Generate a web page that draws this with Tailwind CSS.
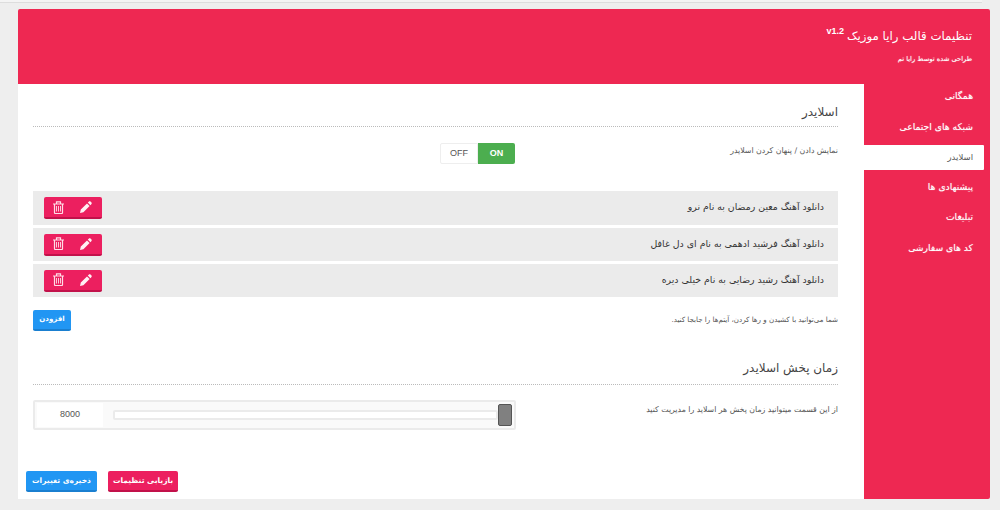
<!DOCTYPE html>
<html lang="fa" dir="rtl">
<head>
<meta charset="utf-8">
<script src="https://cdn.jsdelivr.net/npm/@tailwindcss/browser@4"></script>
</head>
<body class="w-[1000px] h-[510px] overflow-hidden bg-[#eeeeee] font-['DejaVu_Sans',sans-serif] text-[#444]">
<div class="h-[3px] w-[982px] mr-auto bg-[#f4f4f4] border-b border-[#dddddd]"></div>
<div class="w-[972px] h-[490px] mt-[6px] mr-[10px] flex flex-col bg-[#ee2852] rounded-[2px]">
  <header class="h-[75px] shrink-0 pt-[17px] pr-[18px] text-white">
    <div class="flex items-start gap-[3px] h-[21px]">
      <h1 class="text-[11.8px] leading-[20px]">تنظیمات قالب رایا موزیک</h1>
      <span class="text-[9px] leading-[10px] font-bold font-['Liberation_Sans',sans-serif]" dir="ltr">v1.2</span>
    </div>
    <p class="mt-[6px] text-[6.7px] leading-[12px] [text-shadow:0_0_1px_rgba(255,255,255,0.7)]">طراحی شده توسط رایا تم</p>
  </header>
  <div class="flex flex-1 min-h-0">
    <nav class="w-[126px] shrink-0 text-[9.2px] text-white [text-shadow:0_0_1px_rgba(255,255,255,0.6)]">
      <a class="flex items-center h-[24px] pr-[17px]">همگانی</a>
      <a class="flex items-center h-[37px] pr-[17px]">شبکه های اجتماعی</a>
      <a class="flex items-center h-[25px] pr-[11px] mr-[6px] bg-white text-[#555] text-[8.5px] rounded-r-[1px] [text-shadow:none]">اسلایدر</a>
      <a class="flex items-center h-[34px] pr-[17px]">پیشنهادی ها</a>
      <a class="flex items-center h-[26px] pr-[17px]">تبلیغات</a>
      <a class="flex items-center h-[36px] pr-[17px]">کد های سفارشی</a>
    </nav>
    <main class="flex-1 min-w-0 bg-white flex flex-col pr-[26px] pl-[15px] pb-[7px] pt-[19px]">
      <section>
        <h2 class="text-[12px] leading-[19px] text-[#444] h-[24px] border-b border-dotted border-[#bbbbbb]">اسلایدر</h2>
        <div class="flex items-center justify-between h-[23px] mt-[15px] pl-[407px]">
          <span class="text-[7.8px] text-[#555] pb-[6px]">نمایش دادن / پنهان کردن اسلایدر</span>
          <div class="flex h-[21px]" dir="ltr">
            <span class="w-[38px] flex items-center justify-center border border-[#eeeeee] rounded-l-[2px] text-[#555] font-['Liberation_Sans',sans-serif] text-[9px]">OFF</span>
            <span class="w-[37px] flex items-center justify-center bg-[#4cae4f] text-white rounded-r-[2px] font-['Liberation_Sans',sans-serif] text-[9px] font-bold">ON</span>
          </div>
        </div>
        <ul class="mt-[26px] flex flex-col gap-[3px]">
          <li class="h-[34px] bg-[#ebebeb] flex items-center justify-between pr-[14px] pl-[11px]">
            <span class="text-[9.4px] text-[#333] pb-px">دانلود آهنگ معین رمضان به نام نرو</span>
            <div class="w-[58px] h-[22px] bg-[#ec1f5f] border-b-[2px] border-[#c2114a] rounded-[2px] flex items-center justify-between pr-[10px] pl-[9px]" dir="ltr">
              <svg class="w-[11px] h-[13px]" viewBox="0 0 11 13" fill="none" stroke="#ffdce6"><path d="M0 3h11M3.5 3V.8h4V3M1.5 3v8.7c0 .5.3.8.8.8h6.4c.5 0 .8-.3.8-.8V3" stroke-width="1.2"/><path d="M3.5 5v5.5M5.5 5v5.5M7.5 5v5.5" stroke-width=".9"/></svg>
              <svg class="w-[12px] h-[12px]" viewBox="0 0 12 12" fill="#fff0f4"><path d="M0 12l.8-3.4L7 2.4 9.6 5l-6.2 6.2zM7.8 1.6l.9-.9c.6-.6 1.4-.6 2 0l.6.6c.6.6.6 1.4 0 2l-.9.9z"/></svg>
            </div>
          </li>
          <li class="h-[33px] bg-[#ebebeb] flex items-center justify-between pr-[14px] pl-[11px]">
            <span class="text-[9.4px] text-[#333] pb-px">دانلود آهنگ فرشید ادهمی به نام ای دل غافل</span>
            <div class="w-[58px] h-[22px] bg-[#ec1f5f] border-b-[2px] border-[#c2114a] rounded-[2px] flex items-center justify-between pr-[10px] pl-[9px]" dir="ltr">
              <svg class="w-[11px] h-[13px]" viewBox="0 0 11 13" fill="none" stroke="#ffdce6"><path d="M0 3h11M3.5 3V.8h4V3M1.5 3v8.7c0 .5.3.8.8.8h6.4c.5 0 .8-.3.8-.8V3" stroke-width="1.2"/><path d="M3.5 5v5.5M5.5 5v5.5M7.5 5v5.5" stroke-width=".9"/></svg>
              <svg class="w-[12px] h-[12px]" viewBox="0 0 12 12" fill="#fff0f4"><path d="M0 12l.8-3.4L7 2.4 9.6 5l-6.2 6.2zM7.8 1.6l.9-.9c.6-.6 1.4-.6 2 0l.6.6c.6.6.6 1.4 0 2l-.9.9z"/></svg>
            </div>
          </li>
          <li class="h-[33px] bg-[#ebebeb] flex items-center justify-between pr-[14px] pl-[11px]">
            <span class="text-[9.4px] text-[#333] pb-px">دانلود آهنگ رشید رضایی به نام خیلی دیره</span>
            <div class="w-[58px] h-[22px] bg-[#ec1f5f] border-b-[2px] border-[#c2114a] rounded-[2px] flex items-center justify-between pr-[10px] pl-[9px]" dir="ltr">
              <svg class="w-[11px] h-[13px]" viewBox="0 0 11 13" fill="none" stroke="#ffdce6"><path d="M0 3h11M3.5 3V.8h4V3M1.5 3v8.7c0 .5.3.8.8.8h6.4c.5 0 .8-.3.8-.8V3" stroke-width="1.2"/><path d="M3.5 5v5.5M5.5 5v5.5M7.5 5v5.5" stroke-width=".9"/></svg>
              <svg class="w-[12px] h-[12px]" viewBox="0 0 12 12" fill="#fff0f4"><path d="M0 12l.8-3.4L7 2.4 9.6 5l-6.2 6.2zM7.8 1.6l.9-.9c.6-.6 1.4-.6 2 0l.6.6c.6.6.6 1.4 0 2l-.9.9z"/></svg>
            </div>
          </li>
        </ul>
        <div class="flex items-center justify-between mt-[13px]">
          <span class="text-[7.1px] text-[#555]">شما می‌توانید با کشیدن و رها کردن، آیتم‌ها را جابجا کنید.</span>
          <button class="w-[38px] h-[21px] bg-[#2196f3] border-b-[2px] border-[#1a7fd0] text-white text-[7px] font-bold rounded-[2px]">افزودن</button>
        </div>
      </section>
      <section class="mt-[30px]">
        <h2 class="text-[12px] leading-[15px] h-[24px] border-b border-dotted border-[#bbbbbb]">زمان پخش اسلایدر</h2>
        <div class="flex items-center justify-between mt-[15px]">
          <span class="text-[7.8px] text-[#555] pb-[10px]">از این قسمت میتوانید زمان پخش هر اسلاید را مدیریت کنید</span>
          <div class="w-[483px] h-[30px] border-2 border-[#ebebeb] rounded-[2px] bg-[#fafafa] flex items-center px-[2px]" dir="ltr">
            <span class="w-[66px] h-[24px] bg-white flex items-center justify-center text-[9px] text-[#555] font-['Liberation_Sans',sans-serif]">8000</span>
            <div class="flex-1 ml-[10px] h-[10px] border-2 border-[#ebebeb] bg-white rounded-[2px]"></div>
            <span class="w-[14px] h-[22px] bg-[#808080] border border-[#555] rounded-[2px]"></span>
          </div>
        </div>
      </section>
      <div class="mt-auto flex gap-[11px] justify-end -ml-[7px]">
        <button class="w-[70px] h-[21px] bg-[#ec1f5f] border-b-[2px] border-[#c2114a] text-white text-[7.5px] font-bold rounded-[2px]">بازیابی تنظیمات</button>
        <button class="w-[71px] h-[21px] bg-[#2196f3] border-b-[2px] border-[#1a7fd0] text-white text-[7.5px] font-bold rounded-[2px]">ذخیره‌ی تغییرات</button>
      </div>
    </main>
  </div>
</div>
</body>
</html>
